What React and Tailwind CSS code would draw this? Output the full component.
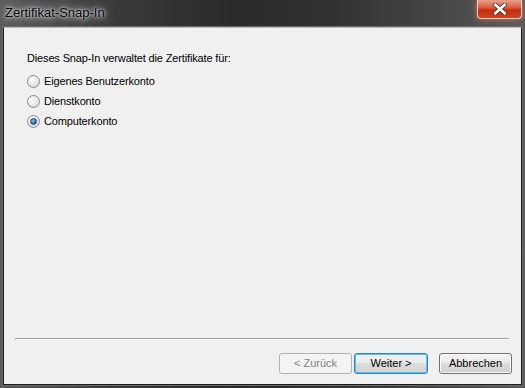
import React from 'react';

const font = { fontFamily: '"Liberation Sans", Arial, sans-serif' };

function Radio({ checked, label }) {
  return (
    <div className="flex h-[20px] items-center">
      <span className="flex h-[13px] w-[13px] items-center justify-center rounded-full border border-[#8a8b8c] bg-[radial-gradient(circle_at_35%_35%,#ffffff,#e4e4e4_60%,#cfd0d1)]">
        {checked && (
          <span className="h-[7px] w-[7px] rounded-full border border-[#2b4a6e] bg-[radial-gradient(circle_at_40%_35%,#9fc4ec,#2f6db0_55%,#1b3d66)]" />
        )}
      </span>
      <span className="ml-[4px] text-[11px] leading-[13px] tracking-[-0.15px] text-black">{label}</span>
    </div>
  );
}

function Button({ children, variant }) {
  if (variant === 'disabled') {
    return (
      <div className="flex h-[21px] w-[73px] items-center justify-center rounded-[3px] border border-[#adb2b5] bg-[#f4f4f4] text-[11px] text-[#838383]">
        {children}
      </div>
    );
  }
  if (variant === 'default') {
    return (
      <div className="flex h-[21px] w-[74px] items-center justify-center rounded-[3px] border border-[#3c7fb1] bg-[linear-gradient(#f1f1f1,#ebebeb_50%,#dddddd_50%,#d3d3d3)] text-[11px] text-black shadow-[inset_0_0_0_1px_#48c9f9]">
        {children}
      </div>
    );
  }
  return (
    <div className="flex h-[21px] w-[73px] items-center justify-center rounded-[3px] border border-[#707070] bg-[linear-gradient(#f2f2f2,#ebebeb_50%,#dddddd_50%,#cfcfcf)] text-[11px] text-black shadow-[inset_0_0_0_1px_#fcfcfc]">
      {children}
    </div>
  );
}

function CloseButton() {
  return (
    <div className="flex h-[19px] w-[45px] items-center justify-center rounded-b-[4px] border border-t-0 border-[#f1d0c8] bg-[linear-gradient(#e8a08c,#d6573c_45%,#c42d0f_55%,#d2441f)] shadow-[0_0_6px_#e07050]">
      <svg width="14" height="12" viewBox="0 0 14 12">
        <path
          d="M2 1.5 L12 10.5 M12 1.5 L2 10.5"
          stroke="#3b3b3b"
          strokeWidth="4.2"
          strokeLinecap="round"
        />
        <path
          d="M2 1.5 L12 10.5 M12 1.5 L2 10.5"
          stroke="#ffffff"
          strokeWidth="2.4"
          strokeLinecap="round"
        />
      </svg>
    </div>
  );
}

export default function App() {
  return (
    <div
      className="flex h-[388px] w-[525px] flex-col bg-[linear-gradient(to_right,#5c5c5c,#3a3a3a_22%,#2a2a2a_45%,#333333_65%,#484848_85%,#5a5a5a)]"
      style={font}
    >
      <div className="flex h-[27px] justify-between">
        <div className="flex items-center pl-[5px] pb-[2px] text-[13px] text-black [text-shadow:0_0_10px_#d8d8d8,0_0_5px_#d8d8d8,0_0_2px_#e8e8e8]">
          Zertifikat-Snap-In
        </div>
        <div className="mr-[3px]">
          <CloseButton />
        </div>
      </div>

      <div className="mx-[3px] mb-[3px] flex flex-1 flex-col border border-[#1c1c1c] border-t-[#b8b8b8] bg-[#f0f0f0] shadow-[0_0_0_1px_#6a6a6a]">
        <div className="px-[23px] pt-[24px]">
          <div className="text-[11px] leading-[13px] tracking-[-0.15px] text-black">
            Dieses Snap-In verwaltet die Zertifikate für:
          </div>
          <div className="mt-[6px] flex flex-col">
            <Radio label="Eigenes Benutzerkonto" />
            <Radio label="Dienstkonto" />
            <Radio checked label="Computerkonto" />
          </div>
        </div>

        <div className="flex-1" />

        <div className="mx-[11px] mr-[12px] h-[2px] border-t border-b border-t-[#a0a0a0] border-b-white" />

        <div className="mt-[13px] mb-[10px] flex justify-end pr-[9px]">
          <Button variant="disabled">&lt; Zurück</Button>
          <div className="ml-[2px]">
            <Button variant="default">Weiter &gt;</Button>
          </div>
          <div className="ml-[11px]">
            <Button>Abbrechen</Button>
          </div>
        </div>
      </div>
    </div>
  );
}
